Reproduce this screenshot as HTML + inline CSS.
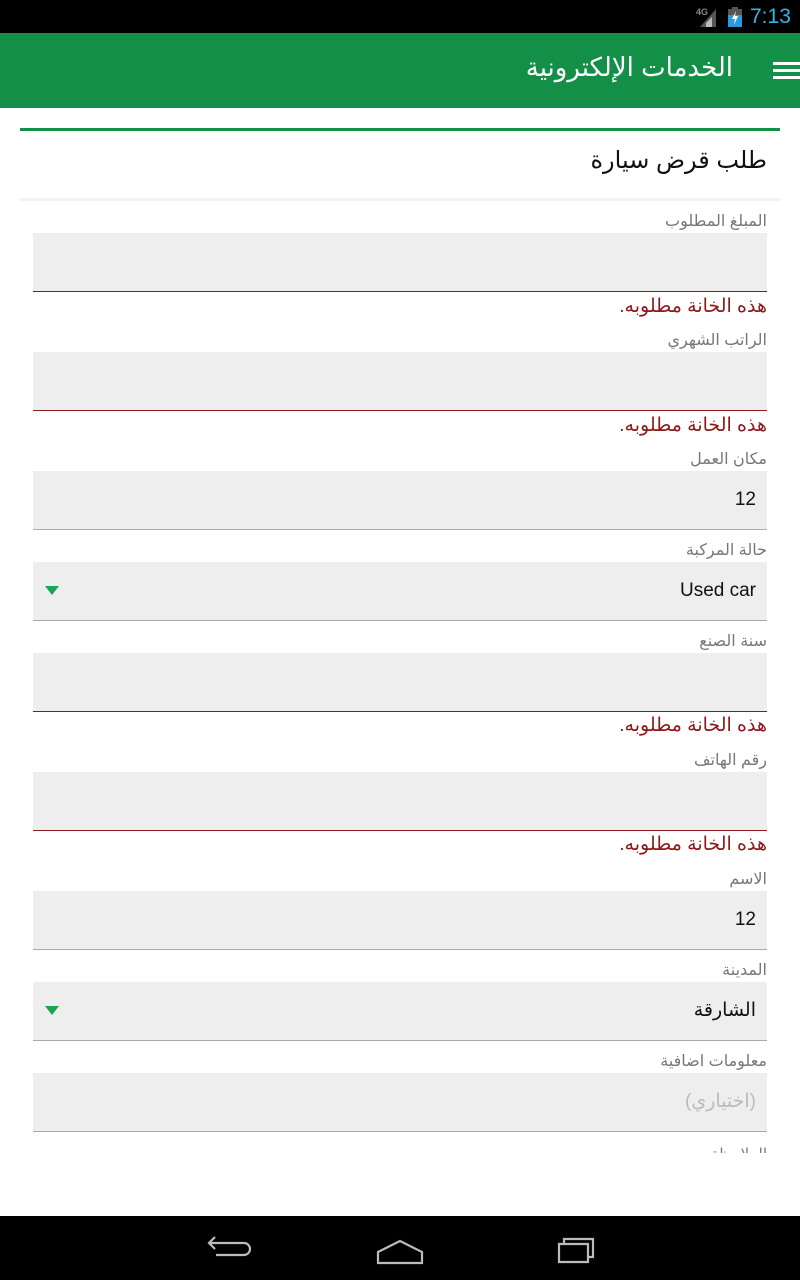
<!DOCTYPE html>
<html><head><meta charset="utf-8"><style>
*{margin:0;padding:0;box-sizing:border-box}
body{width:800px;height:1280px;background:#fff;position:relative;overflow:hidden;font-family:"Liberation Sans","DejaVu Sans","Noto Sans CJK SC",sans-serif}
.a{position:absolute}
.lbl{position:absolute;right:33px;font-size:16px;color:#777;direction:rtl;line-height:20px}
.err{position:absolute;right:33px;font-size:19px;color:#8b1a1a;direction:rtl;line-height:24px}
.box{position:absolute;left:33px;width:734px;height:59px;background:#eeeeee;border-bottom:1px solid #aaa}
.box.e{border-bottom:1px solid #8b1a1a}
.val{position:absolute;right:11px;top:17px;font-size:19px;color:#111;direction:rtl;line-height:24px}
.tri{position:absolute;left:12px;top:24px;width:0;height:0;border-left:7px solid transparent;border-right:7px solid transparent;border-top:9px solid #1aa64f}
</style></head><body>
<div class="a" style="left:0;top:0;width:800px;height:33px;background:#000"></div>
<svg class="a" style="left:694px;top:5px" width="24" height="22"><text x="2" y="10" font-size="9" fill="#888" font-family="Liberation Sans" font-weight="bold">4G</text><polygon points="6,22 22,22 22,4" fill="#555"/><polygon points="12,22 18,22 18,12 12,18" fill="#bbb"/></svg>
<svg class="a" style="left:728px;top:7px" width="14" height="20"><rect x="4" y="0" width="6" height="3" fill="#555"/><rect x="0" y="2" width="14" height="18" fill="#555"/><rect x="0" y="8" width="14" height="12" fill="#2a9ad8"/><polygon points="8,4 4,12 7,12 6,18 10,9 7,9" fill="#fff"/></svg>
<div class="a" style="left:750px;top:5px;font-size:21px;color:#33b5e5;line-height:24px">7:13</div>
<div class="a" style="left:0;top:33px;width:800px;height:75px;background:#138f48"></div>
<div class="a" style="right:67px;top:51px;font-size:26px;color:#fff;direction:rtl;line-height:32px">الخدمات الإلكترونية</div>
<div class="a" style="left:773px;top:62px;width:27px;height:3px;background:#fff"></div>
<div class="a" style="left:773px;top:69px;width:27px;height:3px;background:#fff"></div>
<div class="a" style="left:773px;top:76px;width:27px;height:3px;background:#fff"></div>
<div class="a" style="left:20px;top:128px;width:760px;height:3px;background:#138f48"></div>
<div class="a" style="right:33px;top:146px;font-size:24px;color:#111;direction:rtl;line-height:30px">طلب قرض سيارة</div>
<div class="a" style="left:20px;top:198px;width:760px;height:3px;background:#f3f3f3"></div>

<div class="lbl" style="top:212px">المبلغ المطلوب</div>
<div class="box e" style="top:233px"></div>
<div class="err" style="top:295px">هذه الخانة مطلوبه.</div>

<div class="lbl" style="top:331px">الراتب الشهري</div>
<div class="box e" style="top:352px"></div>
<div class="err" style="top:414px">هذه الخانة مطلوبه.</div>

<div class="lbl" style="top:450px">مكان العمل</div>
<div class="box" style="top:471px"><div class="val">12</div></div>

<div class="lbl" style="top:541px">حالة المركبة</div>
<div class="box" style="top:562px"><div class="val" style="direction:ltr">Used car</div><div class="tri"></div></div>

<div class="lbl" style="top:632px">سنة الصنع</div>
<div class="box e" style="top:653px"></div>
<div class="err" style="top:714px">هذه الخانة مطلوبه.</div>

<div class="lbl" style="top:751px">رقم الهاتف</div>
<div class="box e" style="top:772px"></div>
<div class="err" style="top:833px">هذه الخانة مطلوبه.</div>

<div class="lbl" style="top:870px">الاسم</div>
<div class="box" style="top:891px"><div class="val">12</div></div>

<div class="lbl" style="top:961px">المدينة</div>
<div class="box" style="top:982px"><div class="val">الشارقة</div><div class="tri"></div></div>

<div class="lbl" style="top:1052px">معلومات اضافية</div>
<div class="box" style="top:1073px"><div class="val" style="color:#bbb">(اختياري)</div></div>

<div class="a" style="right:33px;top:1145px;height:8px;overflow:hidden;width:200px"><div style="position:absolute;right:0;top:0;font-size:15px;color:#777;direction:rtl;line-height:20px">الملاحظة</div></div>

<div class="a" style="left:0;top:1216px;width:800px;height:64px;background:#000"></div>
<svg class="a" style="left:200px;top:1230px" width="400" height="40" fill="none" stroke="#bbb" stroke-width="2.2">
<path d="M9,13 L44,13 A6,6 0 0 1 44,25 L16,25 M15,7 L9,13 L15,19"/>
<path d="M178,22 L200,11 L222,22 L222,33 L178,33 Z"/>
<path d="M359,14 L359,32 L388,32 L388,14 Z M364,14 L364,9 L393,9 L393,27 L388,27"/>
</svg>
</body></html>
